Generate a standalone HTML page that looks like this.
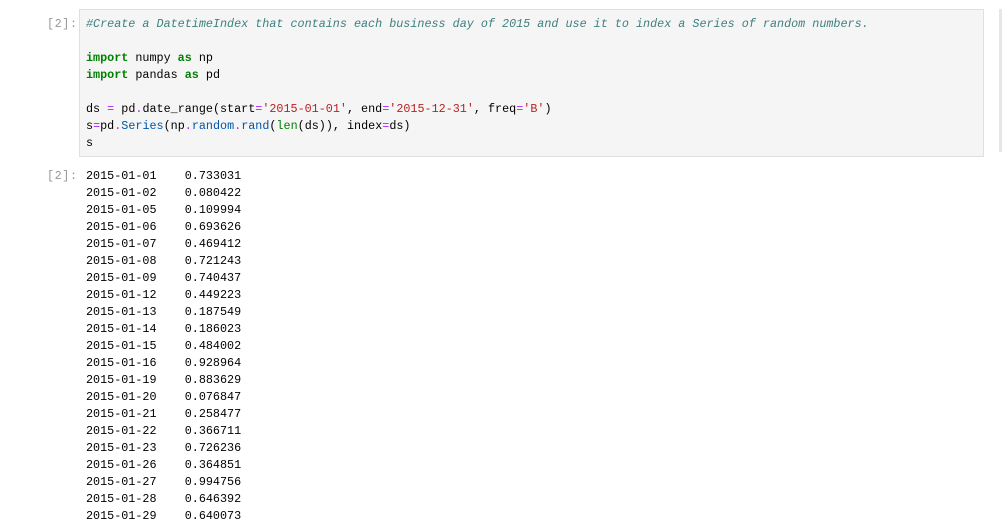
<!DOCTYPE html>
<html><head><style>
body{margin:0;width:1002px;height:513px;overflow:hidden;background:#fff;font-family:"Liberation Mono","DejaVu Sans Mono",monospace;font-size:11.75px;color:#000}
.p{position:absolute;left:47px;color:#999;line-height:17px;letter-spacing:0.6px}
.cell{position:absolute;left:79px;top:9px;width:903px;height:146px;background:#f5f5f5;border:1px solid #e0e0e0}
pre{margin:0;font:inherit;line-height:17px;white-space:pre}
.code{position:absolute;left:86px;top:16px}
.c{color:#408080;font-style:italic}.k{color:#008000;font-weight:bold}.o{color:#aa22ff}.s{color:#ba2121}.b{color:#008000}.n{color:#0055aa}
.out{position:absolute;left:86px;top:167.5px}
.sb{position:absolute;left:999px;top:9px;width:3px;height:143px;background:#e6e6e6}
</style></head><body>
<div class="p" style="top:16px">[2]:</div>
<div class="cell"></div>
<pre class="code"><span class="c">#Create a DatetimeIndex that contains each business day of 2015 and use it to index a Series of random numbers.</span>

<span class="k">import</span> numpy <span class="k">as</span> np
<span class="k">import</span> pandas <span class="k">as</span> pd

ds <span class="o">=</span> pd<span class="o">.</span>date_range(start<span class="o">=</span><span class="s">'2015-01-01'</span>, end<span class="o">=</span><span class="s">'2015-12-31'</span>, freq<span class="o">=</span><span class="s">'B'</span>)
s<span class="o">=</span>pd<span class="o">.</span><span class="n">Series</span>(np<span class="o">.</span><span class="n">random</span><span class="o">.</span><span class="n">rand</span>(<span class="b">len</span>(ds)), index<span class="o">=</span>ds)
s</pre>
<div class="p" style="top:167.5px">[2]:</div>
<pre class="out">2015-01-01    0.733031
2015-01-02    0.080422
2015-01-05    0.109994
2015-01-06    0.693626
2015-01-07    0.469412
2015-01-08    0.721243
2015-01-09    0.740437
2015-01-12    0.449223
2015-01-13    0.187549
2015-01-14    0.186023
2015-01-15    0.484002
2015-01-16    0.928964
2015-01-19    0.883629
2015-01-20    0.076847
2015-01-21    0.258477
2015-01-22    0.366711
2015-01-23    0.726236
2015-01-26    0.364851
2015-01-27    0.994756
2015-01-28    0.646392
2015-01-29    0.640073</pre>
<div class="sb"></div>
</body></html>
